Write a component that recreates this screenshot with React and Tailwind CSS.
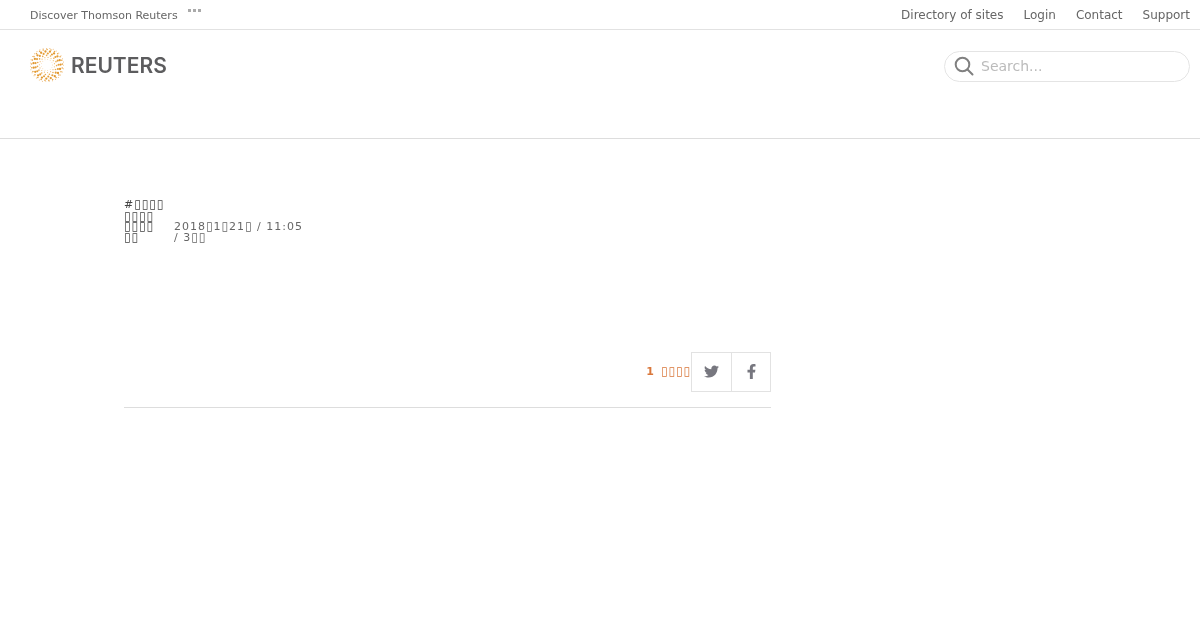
import React from 'react';
import { FaTwitter, FaFacebookF } from 'react-icons/fa';

// the reference page has no glyphs for its CJK text, every character shows as a tall empty box
const Boxes = ({ n }) => (
  <span className="text-[12px] leading-[10px] tracking-[0.9px]">{'▯'.repeat(n)}</span>
);

// dotted spiral mark, computed instead of listing all the circles
const rings = [
  { r: 5.6, size: 0.45, count: 13, color: '#f2c88e' },
  { r: 7.6, size: 0.6, count: 15, color: '#f0bd78' },
  { r: 9.6, size: 0.8, count: 15, color: '#eaa94e' },
  { r: 11.6, size: 1.05, count: 17, color: '#e59f3a' },
  { r: 13.6, size: 1.15, count: 19, color: '#e2982f' },
  { r: 15.5, size: 0.8, count: 25, color: '#e8a64a' },
  { r: 16.8, size: 0.5, count: 31, color: '#ecb46c' },
];
const dots = rings.flatMap((ring, idx) =>
  Array.from({ length: ring.count }, (_, i) => {
    const a = (i / ring.count) * Math.PI * 2 + idx * 0.24;
    return {
      key: `${idx}-${i}`,
      cx: 17 + ring.r * Math.cos(a),
      cy: 17 + ring.r * Math.sin(a),
      size: ring.size,
      color: ring.color,
    };
  })
);

const Logo = () => (
  <svg width="34" height="34" viewBox="0 0 34 34">
    {dots.map((d) => (
      <circle key={d.key} cx={d.cx} cy={d.cy} r={d.size} fill={d.color} />
    ))}
  </svg>
);

const SearchIcon = () => (
  <svg width="20" height="20" viewBox="0 0 20 20" fill="none" stroke="#808080" strokeWidth="2">
    <circle cx="8.5" cy="8.5" r="6.8" />
    <path d="M13.5 13.5 L18.5 18.5" strokeLinecap="round" />
  </svg>
);

const App = () => {
  return (
    <div className="min-h-[630px] bg-white font-['DejaVu_Sans',sans-serif]">
      {/* top bar */}
      <div className="h-[30px] border-b border-[#e2e2e2] pl-[30px] pr-[10px] flex justify-between text-[#666] will-change-transform">
        <div className="flex items-start">
          <span className="mt-[9px] text-[11px] leading-[13px]">Discover Thomson Reuters</span>
          <span className="ml-[10px] mt-[9px] flex gap-[2px]">
            <i className="w-[3px] h-[3px] bg-[#aaa]" />
            <i className="w-[3px] h-[3px] bg-[#aaa]" />
            <i className="w-[3px] h-[3px] bg-[#aaa]" />
          </span>
        </div>
        <div className="flex gap-[20px] text-[12px] leading-[14px] pt-[8px]">
          <span>Directory of sites</span>
          <span>Login</span>
          <span>Contact</span>
          <span>Support</span>
        </div>
      </div>

      {/* header */}
      <div className="h-[109px] border-b border-[#ddd] pl-[30px] pr-[10px] flex justify-between items-start will-change-transform">
        <div className="flex items-center mt-[18px] gap-[7px]">
          <Logo />
          <span className="font-['Inter',sans-serif] font-semibold text-[21px] pt-[2px] leading-[30px] text-[#5c5c5e]">REUTERS</span>
        </div>
        <div className="mt-[21px] w-[246px] h-[31px] rounded-full border border-[#e4e4e4] flex items-center pl-[9px] pb-[1px] gap-[7px]">
          <SearchIcon />
          <input
            placeholder="Search..."
            className="flex-1 min-w-0 outline-none text-[14px] placeholder:text-[#bbb]"
          />
        </div>
      </div>

      {/* article */}
      <div className="ml-[124px] w-[647px] pt-[60px] will-change-transform">
        <div className="text-[11px] leading-[11px] tracking-[1px] text-[#666]">
          <div className="text-[#444] h-[12px]">#<Boxes n={4} /></div>
          <div className="text-[#444] h-[10px]"><Boxes n={4} /></div>
          <div className="flex h-[11px]">
            <span className="w-[50px] text-[#444]"><Boxes n={4} /></span>
            <span>2018<Boxes n={1} />1<Boxes n={1} />21<Boxes n={1} /> / 11:05</span>
          </div>
          <div className="flex h-[11px]">
            <span className="w-[50px] text-[#444]"><Boxes n={2} /></span>
            <span>/ 3<Boxes n={2} /></span>
          </div>
        </div>

        <div className="mt-[109px] pb-[15px] border-b border-[#ddd] flex justify-end items-center">
          <span className="text-[11px] font-bold text-[#d9773b] mr-[7px] pt-[1px]">1</span>
          <span className="text-[11px] text-[#d9773b] pt-[1px]"><Boxes n={4} /></span>
          <div className="flex h-[40px] border border-[#e2e2e2] text-[#77777f]">
            <div className="w-[40px] pb-[2px] border-r border-[#e2e2e2] flex items-center justify-center">
              <FaTwitter size={15} />
            </div>
            <div className="w-[38px] pb-[2px] flex items-center justify-center">
              <FaFacebookF size={15} />
            </div>
          </div>
        </div>
      </div>
    </div>
  );
};

export default App;
